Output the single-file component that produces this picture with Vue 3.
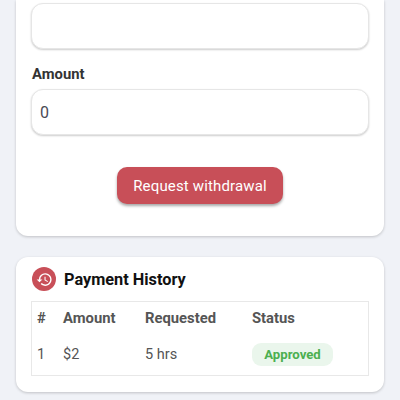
<template>
  <div class="page">
    <section class="card form-card">
      <input class="field" type="text" />

      <label class="field-label" for="amount">Amount</label>
      <input id="amount" class="field" type="text" v-model="amount" />

      <div class="actions">
        <button class="btn" type="button">Request withdrawal</button>
      </div>
    </section>

    <section class="card history-card">
      <div class="history-head">
        <span class="history-icon">
          <svg viewBox="0 0 24 24" width="17" height="17" fill="#fff">
            <path d="M13 3a9 9 0 0 0-9 9H1l3.89 3.89.07.14L9 12H6a7 7 0 1 1 2.05 4.95l-1.42 1.42A9 9 0 1 0 13 3zm-1 5v5l4.28 2.54.72-1.21-3.5-2.08V8H12z" />
          </svg>
        </span>
        <h2>Payment History</h2>
      </div>

      <div class="table-wrap">
        <table>
          <thead>
            <tr>
              <th class="col-num">#</th>
              <th class="col-amount">Amount</th>
              <th class="col-req">Requested</th>
              <th>Status</th>
            </tr>
          </thead>
          <tbody>
            <tr v-for="p in payments" :key="p.id">
              <td>{{ p.id }}</td>
              <td>{{ p.amount }}</td>
              <td>{{ p.requested }}</td>
              <td><span class="badge">{{ p.status }}</span></td>
            </tr>
          </tbody>
        </table>
      </div>
    </section>
  </div>
</template>

<script setup>
import { ref } from 'vue'

const amount = ref('0')
const payments = ref([
  { id: 1, amount: '$2', requested: '5 hrs', status: 'Approved' },
])
</script>

<style scoped>
.page {
  height: 400px;
  overflow: hidden;
  box-sizing: border-box;
  padding: 0 16px;
  background: #f0f2f7;
  font-family: Roboto, sans-serif;
  display: flex;
  flex-direction: column;
  gap: 20px;
}

.card {
  background: #fff;
  border-radius: 12px;
  box-shadow: 0 1px 3px rgba(0, 0, 0, 0.2);
}

.form-card {
  border-radius: 0 0 12px 12px;
  height: 236px;
  box-sizing: border-box;
  padding: 3px 15px 0;
  display: flex;
  flex-direction: column;
}

.field {
  display: block;
  width: 100%;
  height: 46px;
  box-sizing: border-box;
  padding: 0 8px;
  border: 1px solid #e6e6e6;
  border-radius: 12px;
  box-shadow: 0 1px 2px rgba(0, 0, 0, 0.2);
  background: #fff;
  font-family: inherit;
  font-size: 16px;
  color: #4a4a55;
  outline: none;
}

.field-label {
  margin: 16px 0 5px 1px;
  height: 19px;
  line-height: 19px;
  font-size: 14.8px;
  font-weight: 700;
  color: #333;
}

.actions {
  display: flex;
  justify-content: center;
  margin-top: 32px;
}

.btn {
  width: 166px;
  height: 37px;
  border: none;
  border-radius: 10px;
  background: #c84f58;
  color: #fff;
  font-family: inherit;
  font-size: 15px;
  letter-spacing: 0.15px;
  box-shadow: 0 2px 3px rgba(0, 0, 0, 0.35);
}

.history-card {
  height: 135px;
  box-sizing: border-box;
  padding: 10px 15px 0;
  margin-top: 1px;
}

.history-head {
  display: flex;
  align-items: center;
  gap: 8px;
  height: 24px;
}

.history-icon {
  width: 24px;
  height: 24px;
  margin-left: 1px;
  border-radius: 50%;
  background: #c84f58;
  display: flex;
  align-items: center;
  justify-content: center;
}

h2 {
  margin: 0;
  font-size: 16.3px;
  font-weight: 700;
  color: #111;
}

.table-wrap {
  margin-top: 10px;
  height: 75px;
  box-sizing: border-box;
  border: 1px solid #e8e8e8;
}

table {
  width: 100%;
  border-collapse: collapse;
  table-layout: fixed;
  font-size: 14.5px;
  color: #555;
}

th {
  height: 32px;
  padding: 0 0 0 5px;
  text-align: left;
  font-size: 14.8px;
  font-weight: 700;
}

td {
  height: 41px;
  padding: 0 0 0 5px;
}

.col-num {
  width: 21px;
}

.col-amount {
  width: 77px;
}

.col-req {
  width: 102px;
}

.badge {
  display: inline-block;
  width: 81px;
  height: 23px;
  line-height: 23px;
  border-radius: 9px;
  text-align: center;
  background: #eaf6ec;
  color: #4caf50;
  font-size: 13.2px;
  font-weight: 700;
}
</style>
